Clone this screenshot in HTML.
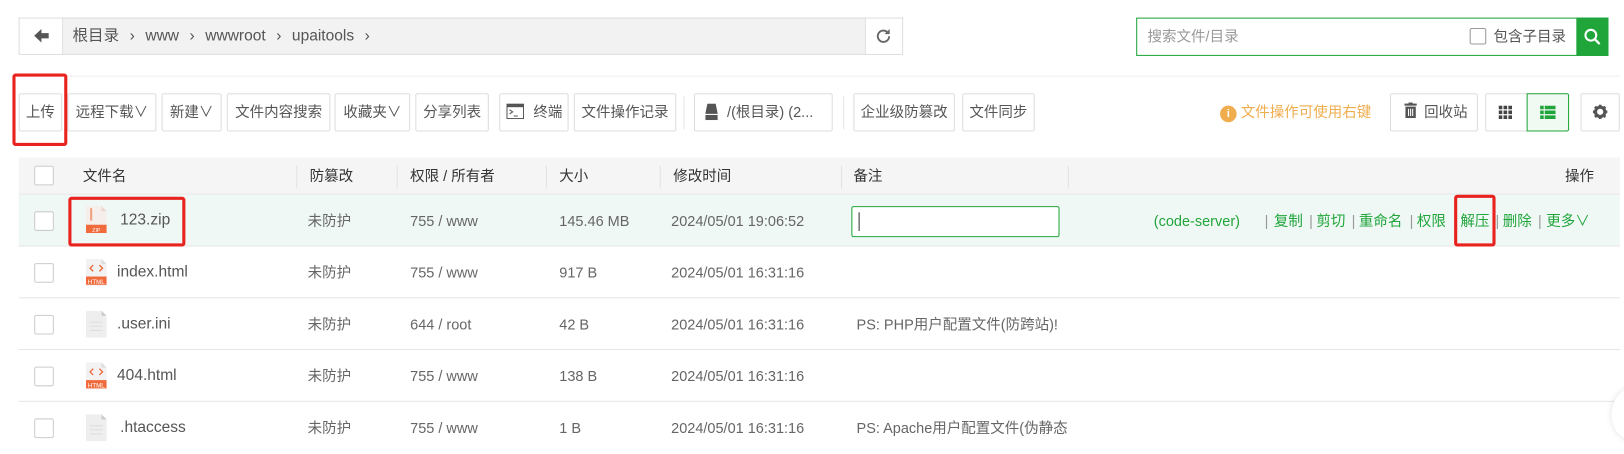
<!DOCTYPE html>
<html><head><meta charset="utf-8">
<style>
*{box-sizing:border-box;margin:0;padding:0}
body{width:1624px;height:426px;overflow:hidden;background:#fff;font-family:"Liberation Sans","Noto Sans CJK SC",sans-serif;font-size:14px;color:#555;position:relative}
#w{position:absolute;left:0;top:0;width:1568px;height:412px;transform:scale(1.0357);transform-origin:0 0}
.a{position:absolute}
.btn{position:absolute;top:90px;height:37px;border:1px solid #ddd;border-radius:2px;background:#fff;color:#555;font-size:14px;line-height:35px;text-align:center;white-space:nowrap}
.chk{position:absolute;left:33px;width:19px;height:19px;border:1px solid #ccc;border-radius:2px;background:#fff}
.row{position:absolute;left:18px;width:1546px;height:50px;border-bottom:1px solid #e6e6e6}
.c{position:absolute;line-height:50px;color:#666;font-size:14px;white-space:nowrap}
.hd{position:absolute;line-height:36px;color:#333;font-size:14px}
.dv{position:absolute;top:160px;width:1px;height:22px;background:#e2e2e2}
.red{position:absolute;border:3px solid #e8231f;border-radius:3px}
.g{position:absolute;top:188px;line-height:50px;color:#20a53a;font-size:14px;white-space:nowrap}
.p{position:absolute;top:188px;line-height:50px;color:#999;font-size:14px}
</style></head><body><div id="w">

<div class="a" style="left:18px;top:17px;width:854px;height:36px;border:1px solid #ddd;background:#f2f2f2"></div>
<div class="a" style="left:19px;top:18px;width:42px;height:34px;background:#fff;border-right:1px solid #ddd"></div>
<svg class="a" style="left:33px;top:28px" width="15" height="13" viewBox="0 0 15 13"><path d="M0 6.5L7 0v4h7v5H7v4z" fill="#555"/></svg>
<div class="a" style="left:70px;top:17px;line-height:36px;color:#555;font-size:15px;white-space:nowrap">根目录 <span style="margin:0 6px">›</span> www <span style="margin:0 6px">›</span> wwwroot <span style="margin:0 6px">›</span> upaitools <span style="margin:0 6px">›</span></div>
<div class="a" style="left:835px;top:18px;width:36px;height:34px;background:#fff;border-left:1px solid #ddd"></div>
<svg class="a" style="left:844px;top:26px" width="18" height="18" viewBox="0 0 18 18"><path d="M14.5 9a5.5 5.5 0 1 1-1.6-3.9" fill="none" stroke="#666" stroke-width="1.8"/><path d="M15 2v5h-5z" fill="#666"/></svg>

<div class="a" style="left:1097px;top:17px;width:456px;height:37px;border:1px solid #20a53a"></div>
<div class="a" style="left:1108px;top:17px;line-height:37px;color:#999;font-size:14px">搜索文件/目录</div>
<div class="a" style="left:1419px;top:27px;width:16px;height:16px;border:1px solid #999;border-radius:2px"></div>
<div class="a" style="left:1442px;top:17px;line-height:37px;color:#555;font-size:14px">包含子目录</div>
<div class="a" style="left:1522px;top:17px;width:31px;height:37px;background:#20a53a"></div>
<svg class="a" style="left:1529px;top:27px" width="17" height="17" viewBox="0 0 17 17"><circle cx="7" cy="7" r="5.2" fill="none" stroke="#fff" stroke-width="2"/><path d="M11 11l4.5 4.5" stroke="#fff" stroke-width="2.2"/></svg>

<div class="a" style="left:18px;top:73px;width:1546px;height:1px;background:#eee"></div>

<div class="btn" style="left:18px;width:42px">上传</div>
<div class="btn" style="left:65px;width:86px">远程下载∨</div>
<div class="btn" style="left:156px;width:58px">新建∨</div>
<div class="btn" style="left:219px;width:100px">文件内容搜索</div>
<div class="btn" style="left:323px;width:73px">收藏夹∨</div>
<div class="btn" style="left:401px;width:71px">分享列表</div>
<div class="btn" style="left:482px;width:67px;text-align:left;padding-left:32px">终端</div>
<svg class="a" style="left:489px;top:100px" width="17" height="15" viewBox="0 0 17 15"><rect x=".5" y=".5" width="16" height="14" fill="#fff" stroke="#555"/><rect x=".5" y=".5" width="16" height="3" fill="#555"/><path d="M3 6l3 2-3 2M7 12h4" fill="none" stroke="#555"/></svg>
<div class="btn" style="left:554px;width:99px">文件操作记录</div>
<div class="a" style="left:660px;top:93px;width:1px;height:32px;background:#e6e6e6"></div>
<div class="btn" style="left:670px;width:134px;text-align:left;padding-left:31px">/(根目录) (2...</div>
<svg class="a" style="left:681px;top:100px" width="12" height="16" viewBox="0 0 12 16"><path d="M2 0h8l2 10H0z" fill="#555"/><rect y="11" width="12" height="5" fill="#555"/></svg>
<div class="a" style="left:814px;top:93px;width:1px;height:32px;background:#e6e6e6"></div>
<div class="btn" style="left:824px;width:98px">企业级防篡改</div>
<div class="btn" style="left:929px;width:70px">文件同步</div>

<div class="a" style="left:1178px;top:102px;width:16px;height:16px;border-radius:50%;background:#f0ad4e;color:#fff;font-size:11px;font-weight:bold;line-height:16px;text-align:center">i</div>
<div class="a" style="left:1198px;top:90px;line-height:37px;color:#f0ad4e;font-size:14px">文件操作可使用右键</div>
<div class="btn" style="left:1342px;width:85px;text-align:left;padding-left:32px">回收站</div>
<svg class="a" style="left:1356px;top:99px" width="12" height="15" viewBox="0 0 12 15"><rect x="0" y="1" width="12" height="2" fill="#555"/><rect x="4" y="0" width="4" height="2" fill="#555"/><path d="M1 4h10v11H1z" fill="#555"/><path d="M4 6v7M6 6v7M8 6v7" stroke="#fff"/></svg>
<div class="btn" style="left:1434px;width:81px"></div>
<div class="a" style="left:1474px;top:90px;width:41px;height:37px;background:#f0f9f2;border:1px solid #20a53a;border-radius:0 2px 2px 0"></div>
<svg class="a" style="left:1447px;top:102px" width="13" height="13" viewBox="0 0 13 13" fill="#444"><rect x="0" y="0" width="3.5" height="3.5"/><rect x="4.7" y="0" width="3.5" height="3.5"/><rect x="9.4" y="0" width="3.5" height="3.5"/><rect x="0" y="4.7" width="3.5" height="3.5"/><rect x="4.7" y="4.7" width="3.5" height="3.5"/><rect x="9.4" y="4.7" width="3.5" height="3.5"/><rect x="0" y="9.4" width="3.5" height="3.5"/><rect x="4.7" y="9.4" width="3.5" height="3.5"/><rect x="9.4" y="9.4" width="3.5" height="3.5"/></svg>
<svg class="a" style="left:1487px;top:102px" width="15" height="13" viewBox="0 0 15 13" fill="#20a53a"><rect width="3.5" height="3.5"/><rect x="4.5" width="10.5" height="3.5"/><rect y="4.7" width="3.5" height="3.5"/><rect x="4.5" y="4.7" width="10.5" height="3.5"/><rect y="9.4" width="3.5" height="3.5"/><rect x="4.5" y="9.4" width="10.5" height="3.5"/></svg>
<div class="btn" style="left:1526px;width:38px"></div>
<svg class="a" style="left:1538px;top:101px" width="14" height="14" viewBox="0 0 14 14"><circle cx="7" cy="7" r="4.5" fill="none" stroke="#555" stroke-width="3"/><g stroke="#555" stroke-width="2.6"><path d="M7 0v3M7 11v3M0 7h3M11 7h3M2 2l2 2M10 10l2 2M12 2l-2 2M2 12l2-2"/></g><circle cx="7" cy="7" r="1.8" fill="#fff"/></svg>

<div class="a" style="left:18px;top:152px;width:1546px;height:36px;background:#f5f5f5;border-bottom:1px solid #e6e6e6"></div>
<div class="chk" style="top:160px"></div>
<div class="hd" style="left:80px;top:152px">文件名</div>
<div class="dv" style="left:286px"></div><div class="hd" style="left:299px;top:152px">防篡改</div>
<div class="dv" style="left:383px"></div><div class="hd" style="left:396px;top:152px">权限 / 所有者</div>
<div class="dv" style="left:527px"></div><div class="hd" style="left:540px;top:152px">大小</div>
<div class="dv" style="left:637px"></div><div class="hd" style="left:650px;top:152px">修改时间</div>
<div class="dv" style="left:812px"></div><div class="hd" style="left:824px;top:152px">备注</div>
<div class="dv" style="left:1031px"></div><div class="hd" style="left:1511px;top:152px">操作</div>

<div class="row" style="top:188px;background:#f0f8f6"></div>
<div class="row" style="top:238px"></div>
<div class="row" style="top:288px"></div>
<div class="row" style="top:338px"></div>

<svg class="a" style="left:83px;top:199px" width="20" height="26" viewBox="0 0 20 26"><path d="M0 0h15l5 5v21H0z" fill="#f5eeea"/><path d="M15 0v5h5" fill="#e8d8d0"/><rect y="18" width="20" height="8" fill="#f06a3b"/><rect x="4" y="2" width="2" height="12" fill="#f0a080"/><text x="10" y="25" font-size="5" fill="#fff" text-anchor="middle" font-family="Liberation Sans">ZIP</text></svg>
<svg class="a" style="left:83px;top:250px" width="20" height="26" viewBox="0 0 20 26"><path d="M0 0h15l5 5v21H0z" fill="#f2f2f2"/><path d="M15 0v5h5" fill="#ddd"/><path d="M7 6l-3 3 3 3M13 6l3 3-3 3" stroke="#f06a3b" fill="none" stroke-width="1.3"/><rect y="17" width="20" height="8" fill="#f06a3b"/><text x="10" y="24" font-size="6" fill="#fff" text-anchor="middle" font-family="Liberation Sans">HTML</text></svg>
<svg class="a" style="left:83px;top:300px" width="20" height="26" viewBox="0 0 20 26"><path d="M0 0h15l5 5v21H0z" fill="#eee"/><path d="M15 0v5h5" fill="#ccc"/><path d="M4 11h12M4 15h12M4 19h12" stroke="#ddd"/></svg>
<svg class="a" style="left:83px;top:350px" width="20" height="26" viewBox="0 0 20 26"><path d="M0 0h15l5 5v21H0z" fill="#f2f2f2"/><path d="M15 0v5h5" fill="#ddd"/><path d="M7 6l-3 3 3 3M13 6l3 3-3 3" stroke="#f06a3b" fill="none" stroke-width="1.3"/><rect y="17" width="20" height="8" fill="#f06a3b"/><text x="10" y="24" font-size="6" fill="#fff" text-anchor="middle" font-family="Liberation Sans">HTML</text></svg>
<svg class="a" style="left:83px;top:400px" width="20" height="26" viewBox="0 0 20 26"><path d="M0 0h15l5 5v21H0z" fill="#eee"/><path d="M15 0v5h5" fill="#ccc"/><path d="M4 11h12M4 15h12M4 19h12" stroke="#ddd"/></svg>

<div class="chk" style="top:204px"></div><div class="chk" style="top:254px"></div><div class="chk" style="top:304px"></div><div class="chk" style="top:354px"></div><div class="chk" style="top:404px"></div>

<div class="c" style="left:116px;top:188px;color:#555;font-size:15px">123.zip</div>
<div class="c" style="left:297px;top:188px">未防护</div><div class="c" style="left:396px;top:188px">755 / www</div><div class="c" style="left:540px;top:188px">145.46 MB</div><div class="c" style="left:648px;top:188px">2024/05/01 19:06:52</div>
<div class="a" style="left:822px;top:199px;width:201px;height:30px;border:1px solid #20a53a;border-radius:2px;background:#fff"></div>
<div class="a" style="left:829px;top:205px;width:1px;height:18px;background:#333"></div>

<div class="g" style="left:1114px">(code-server)</div>
<div class="p" style="left:1221px">|</div><div class="g" style="left:1230px">复制</div>
<div class="p" style="left:1264px">|</div><div class="g" style="left:1271px">剪切</div>
<div class="p" style="left:1305px">|</div><div class="g" style="left:1312px">重命名</div>
<div class="p" style="left:1361px">|</div><div class="g" style="left:1368px">权限</div>
<div class="g" style="left:1410px">解压</div>
<div class="p" style="left:1444px">|</div><div class="g" style="left:1451px">删除</div>
<div class="p" style="left:1485px">|</div><div class="g" style="left:1493px">更多∨</div>

<div class="c" style="left:113px;top:238px;color:#555;font-size:15px">index.html</div>
<div class="c" style="left:297px;top:238px">未防护</div><div class="c" style="left:396px;top:238px">755 / www</div><div class="c" style="left:540px;top:238px">917 B</div><div class="c" style="left:648px;top:238px">2024/05/01 16:31:16</div>

<div class="c" style="left:113px;top:288px;color:#555;font-size:15px">.user.ini</div>
<div class="c" style="left:297px;top:288px">未防护</div><div class="c" style="left:396px;top:288px">644 / root</div><div class="c" style="left:540px;top:288px">42 B</div><div class="c" style="left:648px;top:288px">2024/05/01 16:31:16</div><div class="c" style="left:827px;top:288px">PS: PHP用户配置文件(防跨站)!</div>

<div class="c" style="left:113px;top:338px;color:#555;font-size:15px">404.html</div>
<div class="c" style="left:297px;top:338px">未防护</div><div class="c" style="left:396px;top:338px">755 / www</div><div class="c" style="left:540px;top:338px">138 B</div><div class="c" style="left:648px;top:338px">2024/05/01 16:31:16</div>

<div class="c" style="left:116px;top:388px;color:#555;font-size:15px">.htaccess</div>
<div class="c" style="left:297px;top:388px">未防护</div><div class="c" style="left:396px;top:388px">755 / www</div><div class="c" style="left:540px;top:388px">1 B</div><div class="c" style="left:648px;top:388px">2024/05/01 16:31:16</div><div class="c" style="left:827px;top:388px">PS: Apache用户配置文件(伪静态</div>

<div class="a" style="left:1556px;top:375px;width:40px;height:50px;border-radius:50%;background:#fff;box-shadow:0 0 6px rgba(0,0,0,.12)"></div>

<div class="red" style="left:12px;top:71px;width:53px;height:70px"></div>
<div class="red" style="left:66px;top:190px;width:113px;height:48px"></div>
<div class="red" style="left:1404px;top:188px;width:40px;height:50px"></div>
</div></body></html>
